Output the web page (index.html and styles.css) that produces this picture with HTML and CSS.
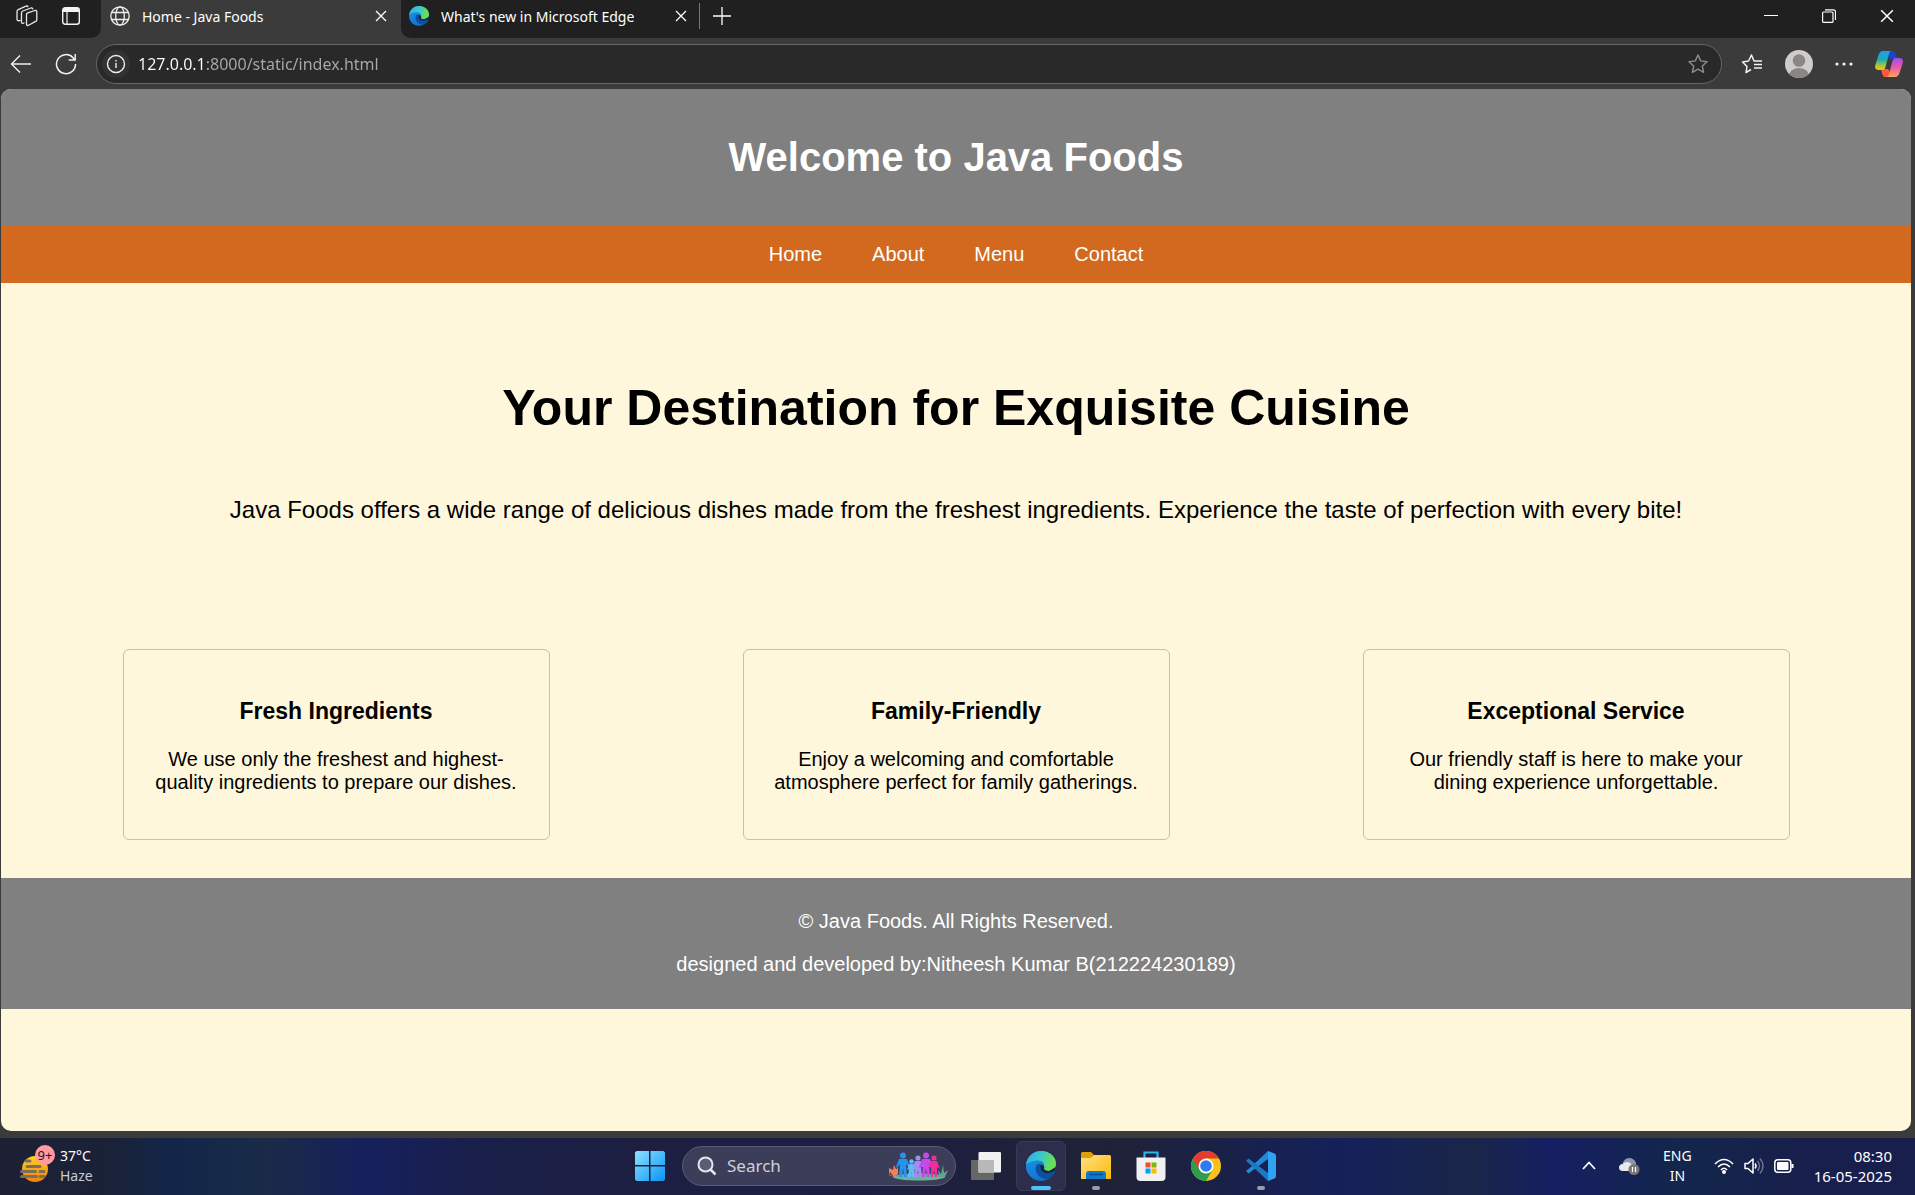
FILE: index.html
```html
<!DOCTYPE html>
<html lang="en">
<head>
<meta charset="utf-8">
<title>Home - Java Foods</title>
<link rel="stylesheet" href="styles.css">
</head>
<body>
<svg class="defs" width="0" height="0" aria-hidden="true">
  <defs>
    <linearGradient id="eg1" x1="0" y1="0" x2="1" y2="0.3"><stop offset="0" stop-color="#2fa9ea"/><stop offset=".5" stop-color="#38c8d0"/><stop offset="1" stop-color="#6be04e"/></linearGradient>
    <linearGradient id="eg2" x1="0" y1="0" x2="0.6" y2="1"><stop offset="0" stop-color="#1b9be6"/><stop offset="1" stop-color="#0f6fd0"/></linearGradient>
    <linearGradient id="win" x1="0" y1="0" x2="1" y2="1"><stop offset="0" stop-color="#8be3ff"/><stop offset="1" stop-color="#0a93f5"/></linearGradient>
    <linearGradient id="fold" x1="0" y1="0" x2="1" y2="1"><stop offset="0" stop-color="#ffe083"/><stop offset="1" stop-color="#fcb90a"/></linearGradient>
    <linearGradient id="cpa" x1="0" y1="0" x2="0" y2="1"><stop offset="0" stop-color="#1aa0f5"/><stop offset=".45" stop-color="#22a8b0"/><stop offset=".75" stop-color="#9cc83c"/><stop offset="1" stop-color="#ffc21a"/></linearGradient>
    <linearGradient id="cpb" x1="0" y1="0" x2="0" y2="1"><stop offset="0" stop-color="#a04cf0"/><stop offset=".5" stop-color="#ec5aa8"/><stop offset="1" stop-color="#ffa45c"/></linearGradient>
    <linearGradient id="sun" x1="0" y1="0" x2="0" y2="1"><stop offset="0" stop-color="#ffd21f"/><stop offset="1" stop-color="#f77f0a"/></linearGradient>
    <symbol id="edge" viewBox="0 0 30 30">
      <circle cx="15" cy="15" r="15" fill="url(#eg2)"/>
      <path d="M0 14C1 5 8 0 15 0c9 0 15 6 15 12.500 0 5-4 7.500-7.500 7.500-4 0-5.500-1.500-5-2.500 2-3 .5-8-5.500-8C6 9.500 1 12 0 14z" fill="url(#eg1)"/>
      <path d="M10.500 14c-3 7 3 15 12 14 3-1.500 5-4 6-6.500.3-.6-.3-.9-.9-.5-5 2.500-12.500.5-13-4.500 0-2 1-3 1-3-2-1-4-.5-5.100.500z" fill="#0d4fa0"/>
      <path d="M15 13.500c-1 1.500-1 5 1.500 7 4 2.500 9 1.500 12.500-.500L30 16l-7 4c-3 0-5-1-5-2.500.7-1 .5-3-3-4z" fill="#1c2140"/>
    </symbol>
    <symbol id="close" viewBox="0 0 12 12"><path d="M1 1l10 10M11 1L1 11" stroke="#fff" stroke-width="1.300" fill="none"/></symbol>
  </defs>
</svg>

<header class="browser">
  <div class="tabstrip">
    <div class="strip-left">
      <button class="icon-btn" aria-label="Workspaces"><svg width="22" height="22" viewBox="0 0 22 22" fill="none" stroke="#e8e8e8" stroke-width="1.300" stroke-linejoin="round" stroke-linecap="round"><path d="M10.500 9.500q0-1.300 1.200-1.700l7.300-2.300q1.800-.5 1.800 1.200v8q0 1.200-1.200 1.700l-7 3.800q-2.100 1-2.100-1.200zM8 18l-1 .3q-1.500.3-1.500-1.300V7.800q0-1.300 1.200-1.800L15 3q1.500-.4 1.800.8M4 15.500l-.8.2Q1 16 1 14.200V6.500Q1 5.200 2.200 4.700L10 1.200q1.600-.5 2 .5"/></svg></button>
      <button class="icon-btn" aria-label="Tab actions"><svg width="18" height="18" viewBox="0 0 18 18"><rect x=".7" y=".7" width="16.600" height="16.600" rx="2.500" fill="none" stroke="#f2f2f2" stroke-width="1.400"/><path d="M1 2.500L2.500 1h13L17 2.500V5H1z" fill="#f2f2f2"/><path d="M5 5v12" stroke="#f2f2f2" stroke-width="1.200"/></svg></button>
    </div>
    <div class="tab active">
      <svg width="20" height="20" viewBox="0 0 20 20" fill="none" stroke="#f0f0f0" stroke-width="1.300"><circle cx="10" cy="10" r="9.200"/><ellipse cx="10" cy="10" rx="4.300" ry="9.200"/><path d="M1.800 6.500h16.400M1.800 13.500h16.400"/></svg>
      <span class="tab-title">Home - Java Foods</span>
      <button class="icon-btn" aria-label="Close tab"><svg width="12" height="12"><use href="#close"/></svg></button>
    </div>
    <div class="strip-right">
      <div class="tab">
        <svg width="20" height="20"><use href="#edge"/></svg>
        <span class="tab-title">What's new in Microsoft Edge</span>
        <button class="icon-btn" aria-label="Close tab"><svg width="12" height="12"><use href="#close"/></svg></button>
      </div>
      <span class="divider"></span>
      <button class="icon-btn new-tab" aria-label="New tab"><svg width="18" height="18" viewBox="0 0 18 18"><path d="M9 0v18M0 9h18" stroke="#fff" stroke-width="1.300"/></svg></button>
      <div class="window-controls">
        <button class="icon-btn" aria-label="Minimize"><svg width="14" height="14" viewBox="0 0 14 14"><path d="M0 6.500h14" stroke="#fff"/></svg></button>
        <button class="icon-btn" aria-label="Restore"><svg width="14" height="14" viewBox="0 0 14 14" fill="none" stroke="#fff" stroke-width="1.200"><rect x=".6" y="3" width="10.400" height="10.400" rx="1"/><path d="M3 .8h8.500q2 0 2 2V11"/></svg></button>
        <button class="icon-btn" aria-label="Close"><svg width="14" height="14" viewBox="0 0 12 12"><use href="#close"/></svg></button>
      </div>
    </div>
  </div>
  <div class="toolbar">
    <button class="icon-btn" aria-label="Back"><svg width="22" height="20" viewBox="0 0 22 20" fill="none" stroke="#f0f0f0" stroke-width="1.400"><path d="M21 10H2M10 1.500L1.500 10l8.500 8.500"/></svg></button>
    <button class="icon-btn" aria-label="Refresh"><svg width="22" height="22" viewBox="0 0 22 22" fill="none" stroke="#f0f0f0" stroke-width="1.500"><path d="M20.500 11A9.500 9.500 0 1 1 18 4.700L19.500 6.500M20.200 1v6h-6.500"/></svg></button>
    <div class="address">
      <span class="info"><svg width="20" height="20" viewBox="0 0 20 20" fill="none" stroke="#eee" stroke-width="1.400"><circle cx="10" cy="10" r="8.500"/><path d="M10 9v5M10 6v1.500"/></svg></span>
      <input class="url" type="text" aria-label="Address" value="127.0.0.1:8000/static/index.html">
      <button class="icon-btn" aria-label="Favorite"><svg width="22" height="22" viewBox="0 0 22 22" fill="none" stroke="#8c8c8c" stroke-width="1.400" stroke-linejoin="round"><path d="M11 2l2.700 5.900 6.300.8-4.700 4.300 1.300 6.400L11 16.200l-5.600 3.200L6.700 13 2 8.700l6.300-.8z"/></svg></button>
    </div>
    <div class="tools">
      <button class="icon-btn" aria-label="Favorites"><svg width="22" height="22" viewBox="0 0 22 22" fill="none" stroke="#f2f2f2" stroke-width="1.500" stroke-linejoin="round"><path d="M10 16.500L5 19.500 6 13.500 1.500 9 7.500 8 10.500 2 13 8h3M13 11.500h8M13 15h8M14.500 8h6.500"/></svg></button>
      <button class="icon-btn" aria-label="Profile"><svg width="28" height="28" viewBox="0 0 28 28"><clipPath id="pc"><circle cx="14" cy="14" r="14"/></clipPath><g clip-path="url(#pc)"><rect width="28" height="28" fill="#cfcdc9"/><circle cx="14" cy="10.500" r="6.300" fill="#8a8683"/><ellipse cx="14" cy="26" rx="10" ry="8" fill="#8a8683"/></g></svg></button>
      <button class="icon-btn" aria-label="Settings"><svg width="18" height="4" viewBox="0 0 18 4" fill="#f2f2f2"><circle cx="2" cy="2" r="1.600"/><circle cx="9" cy="2" r="1.600"/><circle cx="16" cy="2" r="1.600"/></svg></button>
      <button class="icon-btn" aria-label="Copilot"><svg width="28" height="26" viewBox="0 0 28 26"><path d="M14 0h4q2 0 2.500 2.500L22 8h-7l-4-6z" fill="#1a45c8"/><path d="M14 26h-4q-2 0-2.500-2.500L6 18h7l4 6z" fill="#ff5a3c"/><path d="M8 0h8q-1.500.5-2 3l-3.500 13q-.7 3-3.500 3H4Q-.8 19 .3 14L3.500 4Q5 0 8 0z" fill="url(#cpa)"/><path d="M20 26h-8q1.500-.5 2-3l3.500-13q.7-3 3.500-3h3q4.800 0 3.700 5l-3.200 10Q23 26 20 26z" fill="url(#cpb)"/></svg></button>
    </div>
  </div>
</header>

<main class="viewport">
  <header class="site-header"><h1>Welcome to Java Foods</h1></header>
  <nav class="site-nav">
    <a href="#home">Home</a>
    <a href="#about">About</a>
    <a href="#menu">Menu</a>
    <a href="#contact">Contact</a>
  </nav>
  <section class="hero">
    <h2>Your Destination for Exquisite Cuisine</h2>
    <p>Java Foods offers a wide range of delicious dishes made from the freshest ingredients. Experience the taste of perfection with every bite!</p>
  </section>
  <section class="features">
    <article class="card"><h3>Fresh Ingredients</h3><p>We use only the freshest and highest-quality ingredients to prepare our dishes.</p></article>
    <article class="card"><h3>Family-Friendly</h3><p>Enjoy a welcoming and comfortable atmosphere perfect for family gatherings.</p></article>
    <article class="card"><h3>Exceptional Service</h3><p>Our friendly staff is here to make your dining experience unforgettable.</p></article>
  </section>
  <footer class="site-footer">
    <p>© Java Foods. All Rights Reserved.</p>
    <p>designed and developed by:Nitheesh Kumar B(212224230189)</p>
  </footer>
</main>

<footer class="taskbar">
  <button class="weather">
    <span class="weather-icon">
      <svg width="32" height="36" viewBox="0 0 32 36"><circle cx="15" cy="21" r="13" fill="url(#sun)"/><path d="M6 13h4M7 18.500h13M1.500 23.500h14M20 23.500h4M1.500 28.500h15M20 28.500h4" stroke="#77705f" stroke-width="3" stroke-linecap="round"/></svg>
      <span class="badge">9+</span>
    </span>
    <span class="weather-text"><span>37°C</span><span class="dim">Haze</span></span>
  </button>
  <div class="apps">
    <button class="app start" aria-label="Start"><svg width="30" height="30" viewBox="0 0 30 30"><path d="M1.500 0H14v14H0V1.500zM15.500 0h13L30 1.500V14H15.500zM0 15.500h14V30H1.500L0 28.500zM15.500 15.500H30v13L28.500 30h-13z" fill="url(#win)"/></svg></button>
    <div class="search">
      <svg width="20" height="20" viewBox="0 0 20 20" fill="none" stroke="#e6e6ee"><circle cx="8.500" cy="8.500" r="7" stroke-width="2" fill="#5c5c74"/><path d="M13.500 13.500l5 5" stroke-width="2.500"/></svg>
      <input type="text" placeholder="Search" aria-label="Search">
      <svg width="60" height="30" viewBox="0 0 60 30">
        <ellipse cx="31" cy="26" rx="26" ry="3.500" fill="#68b39c"/>
        <path d="M1 17l4 2 1-5 2 4 2-1v6l-4 3-5-3zM2 21l-1 3 5 2" fill="#f08060"/>
        <path d="M51 26l-1-7 3 4 2-9 1 8 4-3-3 7z" fill="#5aa58c"/>
        <g fill="#2494ee"><circle cx="15" cy="4.500" r="3"/><path d="M11 8h8l3 8-1 1-3-4 1 13h-3l-1-9-1 9h-3l1-13-3 4-1-1z"/></g>
        <g fill="#5fbdf5"><circle cx="23.500" cy="10.500" r="2.300"/><path d="M21 13h5l2 6-2-1 1 8h-3l-.5-5-.5 5h-3l1-8-2 1z"/></g>
        <g fill="#a18bf5"><circle cx="30" cy="7" r="2.600"/><path d="M27 10h6l3 7-3-2 1 11h-3l-1-7-1 7h-3l1-11-3 2z"/></g>
        <g fill="#cb45ee"><circle cx="38" cy="4.500" r="3"/><path d="M34 8h8l3 8-1 1-3-4 1 13h-3l-1-9-1 9h-3l1-13-3 4-1-1z"/></g>
        <g fill="#ea2f9f"><circle cx="46" cy="7" r="2.600"/><path d="M43 10h6l3 8-3-2 0 10h-2l-1-7-1 7h-2l0-10-3 1z"/></g>
      </svg>
    </div>
    <button class="app" aria-label="Task view"><svg width="30" height="28" viewBox="0 0 30 28"><rect y="8" width="23" height="20" rx="1" fill="#666"/><rect x="7.500" width="22.500" height="20.500" rx="1" fill="#f1f1f1"/><path d="M7.500 8H22q1 0 1 1v11.500H7.500z" fill="#b9b9b9"/></svg></button>
    <button class="app current" aria-label="Microsoft Edge"><svg width="30" height="30"><use href="#edge"/></svg></button>
    <button class="app running" aria-label="File Explorer"><svg width="30" height="28" viewBox="0 0 30 28"><path d="M0 1.500Q0 0 1.500 0H10l3 3-2 4H0z" fill="#dfa009"/><path d="M0 6h10l3-3h15.500Q30 3 30 4.500V27H0z" fill="url(#fold)"/><path d="M5 27v-5q0-3 3-3h14q3 0 3 3v5z" fill="#0f78cf"/><path d="M9 22.500h12" stroke="#064d91" stroke-width="1.500" stroke-linecap="round"/></svg></button>
    <button class="app" aria-label="Microsoft Store"><svg width="30" height="30" viewBox="0 0 30 30"><path d="M8.500 7V1.500h13V7" fill="none" stroke="#29b7ee" stroke-width="2.200"/><path d="M.5 6.500h29V26q0 4-4 4h-21q-4 0-4-4z" fill="#f1f1f3"/><path d="M9.500 11.500h5v5h-5z" fill="#f25022"/><path d="M15.500 11.500h5v5h-5z" fill="#7fba00"/><path d="M9.500 17.500h5v5h-5z" fill="#00a4ef"/><path d="M15.500 17.500h5v5h-5z" fill="#ffb900"/></svg></button>
    <button class="app" aria-label="Google Chrome"><svg width="30" height="30" viewBox="0 0 30 30"><circle cx="15" cy="15" r="15" fill="#fbc116"/><path d="M15 15L2 7.500A15 15 0 0 0 15 30l6.500-11.200z" fill="#2f9e4b"/><path d="M2 7.500A15 15 0 0 1 28 7.500H15L8.500 18.800z" fill="#e33b2e"/><circle cx="15" cy="15" r="7.500" fill="#fff"/><circle cx="15" cy="15" r="5.800" fill="#2f7cf0"/></svg></button>
    <button class="app running" aria-label="Visual Studio Code"><svg width="30" height="30" viewBox="0 0 30 30"><path d="M22 0L6 15 0 20l2.500 2.500L22 8z" fill="#2289d6"/><path d="M22 30L6 15 0 10l2.500-2.500L22 22z" fill="#1a79c4"/><path d="M22 0l6.500 2.500Q30 3 30 5v20q0 2-1.500 2.500L22 30z" fill="#2fa3f2"/></svg></button>
  </div>
  <div class="tray">
    <button class="icon-btn" aria-label="Hidden icons"><svg width="14" height="9" viewBox="0 0 14 9" fill="none" stroke="#fff" stroke-width="1.800"><path d="M1 8l6-6.500L13 8"/></svg></button>
    <button class="icon-btn cloud" aria-label="OneDrive"><svg width="21" height="18" viewBox="0 0 21 18"><path d="M3 8Q5 1 10 1t7 5l-1 7H3z" fill="#8e96ac"/><path d="M4 14Q0 14 0 10.500T4 7q1-2 4-2 4 0 5 4l2 5z" fill="#e8e9ef"/><circle cx="15" cy="12.500" r="5.500" fill="#777"/><path d="M13.500 10v5M16.500 10v5" stroke="#fff" stroke-width="1.200"/></svg></button>
    <button class="stack lang"><span>ENG</span><span>IN</span></button>
    <button class="status" aria-label="Network, volume and battery">
      <svg width="20" height="16" viewBox="0 0 20 16" fill="none" stroke="#fff" stroke-width="1.600"><path d="M1 6q9-9 18 0M4 9q6-6 12 0M7 12q3-3.500 6 0"/><circle cx="10" cy="14" r="1.200" fill="#fff"/></svg>
      <svg width="20" height="18" viewBox="0 0 20 18" fill="none" stroke="#fff" stroke-width="1.500" stroke-linejoin="round"><path d="M1 6.500h3L9 2v14l-5-4.500H1z"/><path d="M11 6.500q2 2.500 0 5"/><path d="M13.500 4q4 5 0 10M16 1.500q6 7.500 0 15" stroke="#6a7195"/></svg>
      <svg width="20" height="14" viewBox="0 0 20 14"><rect x=".8" y=".8" width="16" height="12.400" rx="3" fill="none" stroke="#fff" stroke-width="1.500"/><rect x="3" y="3" width="11.500" height="8" rx="1" fill="#fff"/><path d="M18.500 5v4" stroke="#fff" stroke-width="2"/></svg>
    </button>
    <button class="stack clock"><span>08:30</span><span>16-05-2025</span></button>
  </div>
</footer>
</body>
</html>
```
FILE: styles.css
```css
* { box-sizing: border-box; }

body {
  margin: 0;
  min-height: 100vh;
  display: flex;
  flex-direction: column;
  background: #3b3b3b;
  color: #fff;
  font-family: "Noto Sans", "Open Sans", sans-serif;
}

button {
  margin: 0;
  padding: 0;
  border: 0;
  background: none;
  color: inherit;
  font: inherit;
}

input {
  min-width: 0;
  padding: 0;
  border: 0;
  outline: 0;
  background: none;
  font: inherit;
}

svg { display: block; flex: none; }
.defs { position: absolute; }

.icon-btn { display: flex; align-items: center; justify-content: center; }

/* Browser chrome */
.tabstrip { display: flex; height: 38px; }

.strip-left,
.strip-right {
  display: flex;
  align-items: center;
  padding-bottom: 6px;
  background: #202020;
}

.strip-left { width: 101px; gap: 24px; padding-left: 16px; border-bottom-right-radius: 10px; }
.strip-right { flex: 1; border-bottom-left-radius: 10px; }

.tab { display: flex; align-items: center; width: 300px; padding: 0 14px 0 9px; font-size: 14px; }
.tab.active { padding-bottom: 6px; }
.tab-title { flex: 1; padding-left: 12px; white-space: nowrap; }
.strip-right .tab { width: 298px; padding: 0 12px 0 8px; }
.divider { width: 1px; height: 26px; background: #777; }
.new-tab { margin-left: 13px; }
.window-controls { display: flex; gap: 44px; margin-left: auto; padding-right: 21px; }

.toolbar { display: flex; align-items: center; height: 51px; gap: 23px; padding: 0 12px 0 10px; }

.address {
  flex: 1;
  display: flex;
  align-items: center;
  height: 40px;
  margin-left: -4px;
  padding: 0 12px 0 5px;
  border: 1px solid #666;
  border-radius: 20px;
  background: #292929;
}

.info { display: flex; padding: 4px; border-radius: 50%; background: #333; }

.url {
  flex: 1;
  margin-left: 8px;
  font-size: 16px;
  background: linear-gradient(90deg, #fff 69px, #aaa 69px);
  -webkit-background-clip: text;
  background-clip: text;
  -webkit-text-fill-color: transparent;
}

.tools { display: flex; align-items: center; gap: 22px; margin-left: -4px; }

/* Java Foods page */
.viewport {
  flex: 1;
  margin: 0 4px 6px 1px;
  border-radius: 10px;
  overflow: hidden;
  background: #fff7dc;
  color: #000;
  font: 20px/23px "Liberation Sans", Arial, sans-serif;
  text-align: center;
}

.site-header { padding: 45px 25px; background: #808080; color: #fff; }
.site-header h1 { margin: 0; font-size: 40px; line-height: 46px; }

.site-nav { display: flex; justify-content: center; gap: 50px; padding: 18px 18px 17px; background: #d2691e; }
.site-nav a { color: #fff; text-decoration: none; }

.hero { padding: 96px 25px 125px; }
.hero h2 { margin: 0; font-size: 50px; line-height: 58px; }
.hero p { margin: 59px 0 0; font-size: 24px; line-height: 28px; }

.features { display: flex; justify-content: space-around; padding: 0 25px 38px; }
.card { width: 427px; padding: 48px 25px 45px; border: 1px solid #c0c0c0; border-radius: 6px; }
.card h3 { margin: 0; font-size: 23px; line-height: 27px; }
.card p { margin: 23px 0 0; }

.site-footer { padding: 32px 25px 33px; background: #808080; color: #fff; }
.site-footer p { margin: 0; }
.site-footer p + p { margin-top: 20px; }

/* Taskbar */
.taskbar {
  display: grid;
  grid-template-columns: 1fr auto 1fr;
  align-items: center;
  height: 58px;
  padding-bottom: 2px;
  border-top: 1px solid #34394f;
  background: linear-gradient(90deg, #1d2034 0, #1a2238 6%, #12264a 9%, #192b47 14%, #15205c 19%, #1a1f4a 25%, #1c1f42 33%, #1c1e42 42%, #1f2237 58%, #14205a 70%, #1a2648 77%, #151f62 81%, #13264a 88%, #181f4c 94%, #191f4c 100%);
  font-size: 14px;
  line-height: 20px;
}

.weather { display: flex; align-items: center; gap: 5px; padding-left: 20px; justify-self: start; text-align: left; }
.weather-icon { position: relative; display: block; width: 35px; }

.badge {
  position: absolute;
  top: -3px;
  right: 0;
  width: 20px;
  height: 20px;
  border-radius: 50%;
  background: #ff99a4;
  color: #1a1a1a;
  font-size: 13px;
  text-align: center;
}

.weather-text { display: flex; flex-direction: column; }
.dim { color: #c8ccd4; }

.apps { display: flex; align-items: center; gap: 5px; padding-right: 4px; }

.app {
  position: relative;
  display: flex;
  align-items: center;
  justify-content: center;
  width: 50px;
  height: 50px;
  border: 1px solid transparent;
  border-radius: 6px;
}

.current { border-color: #393a57; background: #2d2e4b; }

.current::after,
.running::after {
  content: "";
  position: absolute;
  bottom: 0;
  width: 8px;
  height: 4px;
  border-radius: 2px;
  background: #9a9bab;
}

.current::after { width: 20px; background: #4cc2ff; }

.search {
  display: flex;
  align-items: center;
  width: 274px;
  height: 40px;
  margin-left: 2px;
  padding: 0 7px 0 14px;
  border: 1px solid #5a5c78;
  border-radius: 20px;
  background: #3c3d59;
}

.search input { flex: 1; margin-left: 10px; font-size: 17px; }
.search input::placeholder { color: #cfd0da; opacity: 1; }

.tray { display: flex; align-items: center; justify-self: end; padding-right: 23px; }
.cloud { margin-left: 23px; }
.stack { display: flex; flex-direction: column; }
.lang { align-items: center; margin-left: 23px; }
.status { display: flex; align-items: center; gap: 10px; margin-left: 22px; }
.clock { align-items: flex-end; margin-left: 20px; font-size: 15px; }
```
